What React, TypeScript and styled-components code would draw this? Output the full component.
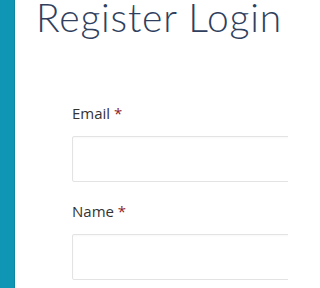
import React from 'react'
import styled, { createGlobalStyle } from 'styled-components'

const GlobalStyle = createGlobalStyle`
  html, body {
    margin: 0;
    padding: 0;
    background: #ffffff;
  }
  body {
    font-family: 'Open Sans', 'Liberation Sans', sans-serif;
  }
`

const Page = styled.div`
  display: flex;
  width: 288px;
  height: 288px;
  overflow: hidden;
`

const Sidebar = styled.div`
  flex: 0 0 15px;
  background: #0f96b4;
  box-shadow: inset -1px 0 0 #0c86a2;
`

const Main = styled.main`
  flex: 1;
  min-width: 0;
  padding-left: 21px;
`

const Title = styled.h1`
  margin: 0;
  font-family: Lato, 'Open Sans', sans-serif;
  font-weight: 300;
  font-size: 39px;
  line-height: 34px;
  letter-spacing: 0.8px;
  color: #303f5e;
  white-space: nowrap;
`

const Form = styled.form`
  display: flex;
  flex-direction: column;
  gap: 19px;
  margin-top: 69px;
  padding-left: 36px;
`

const Field = styled.div`
  display: flex;
  flex-direction: column;
  gap: 13px;
`

const Label = styled.label`
  font-size: 15px;
  line-height: 20px;
  color: #333333;
  white-space: nowrap;
`

const Required = styled.span`
  color: #8c1c2c;
`

const Input = styled.input`
  box-sizing: border-box;
  width: 260px;
  height: 46px;
  border: 1px solid #e3e3e3;
  border-radius: 2px;
  background: #ffffff;
  box-shadow: inset 0 1px 2px rgba(0, 0, 0, 0.03);
  outline: none;
`

const fields = ['Email', 'Name', 'Password']

export default function App() {
  return (
    <>
      <GlobalStyle />
      <Page>
        <Sidebar />
        <Main>
          <Title>Register Login</Title>
          <Form>
            {fields.map((f) => (
              <Field key={f}>
                <Label>
                  {f} <Required>*</Required>
                </Label>
                <Input type="text" />
              </Field>
            ))}
          </Form>
        </Main>
      </Page>
    </>
  )
}
